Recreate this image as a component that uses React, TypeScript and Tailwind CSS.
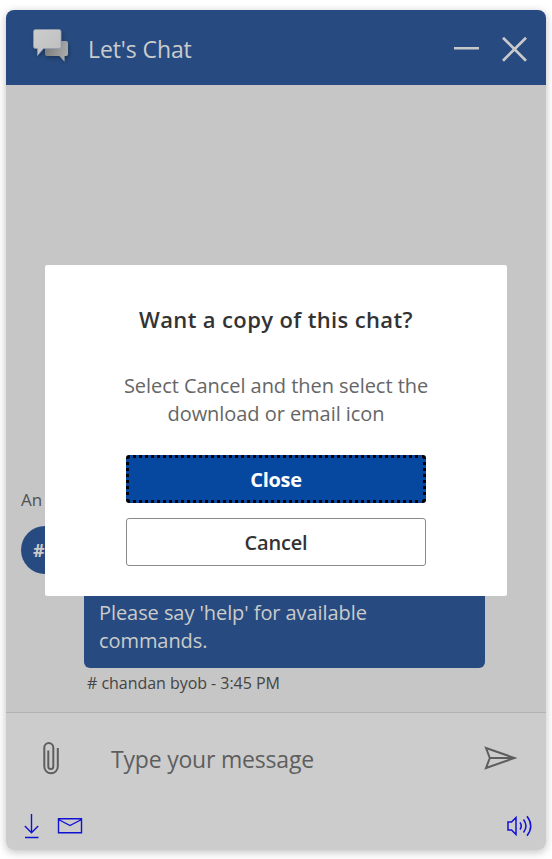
function ChatLogo() {
  return (
    <svg width="48" height="48" viewBox="0 0 48 48" className="shrink-0">
      <defs>
        <linearGradient id="front" x1="0" y1="0" x2="1" y2="1">
          <stop offset="0" stopColor="#cdcdcd" />
          <stop offset="1" stopColor="#bdbdbd" />
        </linearGradient>
        <linearGradient id="back" x1="0" y1="0" x2="1" y2="0.3">
          <stop offset="0" stopColor="#777" />
          <stop offset="1" stopColor="#a8a8a8" />
        </linearGradient>
        <filter id="soft" x="-30%" y="-30%" width="160%" height="170%">
          <feDropShadow dx="1" dy="2" stdDeviation="2" floodColor="#000" floodOpacity="0.3" />
        </filter>
      </defs>
      <g filter="url(#soft)">
        <path d="M21 18h19a2 2 0 0 1 2 2v11a2 2 0 0 1-2 2h-1.500v5.800L33.500 33H21a2 2 0 0 1-2-2V20a2 2 0 0 1 2-2z" fill="url(#back)" />
        <path d="M9.500 6.500H33a2 2 0 0 1 2 2v15a2 2 0 0 1-2 2H17.500l-6 7v-7h-2a2 2 0 0 1-2-2v-15a2 2 0 0 1 2-2z" fill="url(#front)" stroke="#8f9cb5" strokeWidth="0.700" />
      </g>
    </svg>
  );
}

function Header() {
  return (
    <header className="flex h-[75px] shrink-0 items-start bg-[#274b80] text-[#cbcbcb]">
      <div className="ml-5 mt-[13px]">
        <ChatLogo />
      </div>
      <h1 className="ml-[14px] mt-[23px] text-[23px] leading-8 tracking-[-0.1px] whitespace-nowrap">Let's Chat</h1>
      <div className="mr-[19px] ml-auto mt-[27px] flex items-center gap-[23px]">
        <svg width="25" height="25" viewBox="0 0 25 25">
          <path d="M0 11.300h25" stroke="#c9c9c9" strokeWidth="2.500" />
        </svg>
        <svg width="25" height="25" viewBox="0 0 25 25">
          <path d="M1 .7l23 23M24 .7l-23 23" stroke="#c9c9c9" strokeWidth="2.700" />
        </svg>
      </div>
    </header>
  );
}

function Messages() {
  return (
    <div className="flex h-[627px] shrink-0 flex-col justify-end bg-[#c6c6c6] pb-[18px]">
      <p className="ml-[15px] text-[17px] leading-6 text-[#515151]">An</p>
      <div className="mt-[14px] flex">
        <div className="ml-[15px] flex h-12 w-12 shrink-0 items-center rounded-full bg-[#274b80] pl-3 text-[18px] font-bold text-[#cbcbcb]">
          #
        </div>
        <div className="ml-[15px] w-[401px]">
          <div className="h-[142px] rounded-[6px] bg-[#274b80] px-[15px] pt-[73px] text-[20px] leading-7 tracking-[-0.070px] text-[#cbcbcb]">
            <p className="whitespace-nowrap">Please say 'help' for available</p>
            <p>commands.</p>
          </div>
          <p className="ml-[3px] mt-1 text-[16px] leading-[22px] tracking-[-0.040px] whitespace-nowrap text-[#444]"># chandan byob - 3:45 PM</p>
        </div>
      </div>
    </div>
  );
}

function Composer() {
  return (
    <footer className="flex flex-1 flex-col border-t border-[#b3b3b3] bg-[#ccc]">
      <div className="flex h-[91px] items-center">
        <svg width="20" height="36" viewBox="0 0 20 36" className="ml-[34px] -mt-1" fill="none" stroke="#5e5e5e" strokeWidth="2">
          <path d="M8.500 11V27a2.500 2.500 0 0 0 5 0V8a4.500 4.500 0 0 0-9 0v19a6.750 6.750 0 0 0 13.500 0V8.500" transform="translate(-.2 .6)" />
        </svg>
        <span className="ml-[51px] mt-[2px] text-[23px] tracking-[-0.2px] whitespace-nowrap text-[#5e5e5e]">Type your message</span>
        <svg width="34" height="26" viewBox="0 0 34 26" className="mr-[28px] ml-auto -mt-[2px]" fill="none" stroke="#5e5e5e" strokeWidth="2">
          <path d="M2 3l28.500 10L2 23l3.800-10zM5.800 13h24.700" />
        </svg>
      </div>
      <div className="mt-[9px] flex items-center text-[#1111d4]">
        <svg width="16" height="26" viewBox="0 0 16 26" className="ml-[18px]" fill="none" stroke="currentColor" strokeWidth="1.400">
          <path d="M7.500 1v18.500M.8 13l6.700 6.700 6.700-6.700M1 24.500h13.500" />
        </svg>
        <svg width="26" height="18" viewBox="0 0 26 18" className="ml-[17px]" fill="none" stroke="currentColor" strokeWidth="1.400">
          <path d="M1.500 1.700h23v14.100h-23zM1.500 2.500l11.500 6 11.500-6" />
        </svg>
        <svg width="28" height="24" viewBox="0 0 28 24" className="mr-[12px] ml-auto" fill="none" stroke="currentColor" strokeWidth="1.500">
          <path d="M2 8h3.500l4.500-4.500v17L5.500 16H2zM14 8.500q2.500 3.500 0 7M17.500 5.500q5 6.500 0 13M21 2.300q7.500 9.700 0 19.400" />
        </svg>
      </div>
    </footer>
  );
}

function CloseDialog() {
  return (
    <div className="absolute top-[255px] left-[39px] flex h-[331px] w-[462px] flex-col items-center rounded-[2px] bg-white">
      <h2 className="mt-[38px] text-[22px] leading-8 font-semibold tracking-[0.37px] whitespace-nowrap text-[#333]">Want a copy of this chat?</h2>
      <div className="mt-[37px] text-center text-[20px] leading-7 tracking-[-0.050px] whitespace-nowrap text-[#666]">
        <p>Select Cancel and then select the</p>
        <p>download or email icon</p>
      </div>
      <button className="mt-[27px] h-12 w-[300px] shrink-0 rounded-[3px] border-3 border-dotted border-black bg-[#06489f] pt-px text-[20px] font-bold tracking-[-0.3px] text-white">
        Close
      </button>
      <button className="mt-[15px] h-12 w-[300px] shrink-0 rounded-[3px] border border-[#8a8a8a] bg-white pt-px text-[20px] font-semibold tracking-[-0.2px] text-[#333]">
        Cancel
      </button>
    </div>
  );
}

export default function App() {
  return (
    <div className="h-[859px] w-[552px] overflow-hidden bg-white px-[6px] pt-[10px] font-['Open_Sans','Noto_Sans',sans-serif]">
      <div className="relative h-[840px] w-[540px] rounded-[8px] shadow-[0_2px_8px_rgba(0,0,0,0.25)]">
        <div className="flex h-full flex-col overflow-hidden rounded-[8px]">
          <Header />
          <Messages />
          <Composer />
        </div>
        <CloseDialog />
      </div>
    </div>
  );
}
